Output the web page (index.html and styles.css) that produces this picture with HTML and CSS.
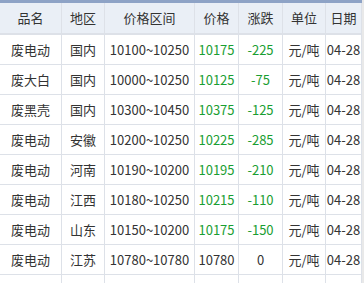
FILE: index.html
```html
<!DOCTYPE html>
<html lang="zh-CN">
<head>
<meta charset="utf-8">
<title>废电瓶价格</title>
<link rel="stylesheet" href="styles.css">
</head>
<body>
<div class="wrap">
  <table class="price-table">
    <colgroup>
      <col class="c-name"><col class="c-area"><col class="c-range"><col class="c-price"><col class="c-change"><col class="c-unit"><col class="c-date">
    </colgroup>
    <thead>
      <tr><th>品名</th><th>地区</th><th>价格区间</th><th>价格</th><th>涨跌</th><th>单位</th><th>日期</th></tr>
    </thead>
    <tbody>
      <tr><td>废电动</td><td>国内</td><td>10100~10250</td><td class="down">10175</td><td class="down">-225</td><td>元/吨</td><td>04-28</td></tr>
      <tr><td>废大白</td><td>国内</td><td>10000~10250</td><td class="down">10125</td><td class="down">-75</td><td>元/吨</td><td>04-28</td></tr>
      <tr><td>废黑壳</td><td>国内</td><td>10300~10450</td><td class="down">10375</td><td class="down">-125</td><td>元/吨</td><td>04-28</td></tr>
      <tr><td>废电动</td><td>安徽</td><td>10200~10250</td><td class="down">10225</td><td class="down">-285</td><td>元/吨</td><td>04-28</td></tr>
      <tr><td>废电动</td><td>河南</td><td>10190~10200</td><td class="down">10195</td><td class="down">-210</td><td>元/吨</td><td>04-28</td></tr>
      <tr><td>废电动</td><td>江西</td><td>10180~10250</td><td class="down">10215</td><td class="down">-110</td><td>元/吨</td><td>04-28</td></tr>
      <tr><td>废电动</td><td>山东</td><td>10150~10200</td><td class="down">10175</td><td class="down">-150</td><td>元/吨</td><td>04-28</td></tr>
      <tr><td>废电动</td><td>江苏</td><td>10780~10780</td><td>10780</td><td>0</td><td>元/吨</td><td>04-28</td></tr>
      <tr><td>&nbsp;</td><td>&nbsp;</td><td>&nbsp;</td><td>&nbsp;</td><td>&nbsp;</td><td>&nbsp;</td><td>&nbsp;</td></tr>
    </tbody>
  </table>
  <div class="scroll-track"></div>
</div>
</body>
</html>
```

FILE: styles.css
```css
html, body {
  margin: 0;
  padding: 0;
  background: #ffffff;
  overflow: hidden;
}

.wrap {
  display: flex;
  align-items: flex-start;
  font-family: "Noto Sans CJK SC", "Noto Sans", sans-serif;
  font-size: 13px;
  color: #333333;
}

.price-table {
  width: 362px;
  flex: none;
  table-layout: fixed;
  border-collapse: separate;
  border-spacing: 0;
  border-top: 3px solid #8ea3c6;
}

.c-name { width: 62px; }
.c-area { width: 43px; }
.c-range { width: 90px; }
.c-price { width: 44px; }
.c-change { width: 44px; }
.c-unit { width: 43px; }
.c-date { width: 36px; }

.price-table th,
.price-table td {
  box-sizing: border-box;
  padding: 0;
  text-align: center;
  white-space: nowrap;
  overflow: hidden;
  border-right: 1px solid #dde1e8;
  border-bottom: 1px solid #dde1e8;
  line-height: 16px;
}

.price-table th {
  height: 32px;
  font-weight: normal;
  background: #eaeff6;
  border-bottom: 2px solid #dde1e8;
}

.price-table td {
  height: 30px;
}

.price-table td.down {
  color: #1a9e32;
}

.scroll-track {
  flex: 1;
  align-self: stretch;
  height: 283px;
  background: #e9e9e9;
}
```
